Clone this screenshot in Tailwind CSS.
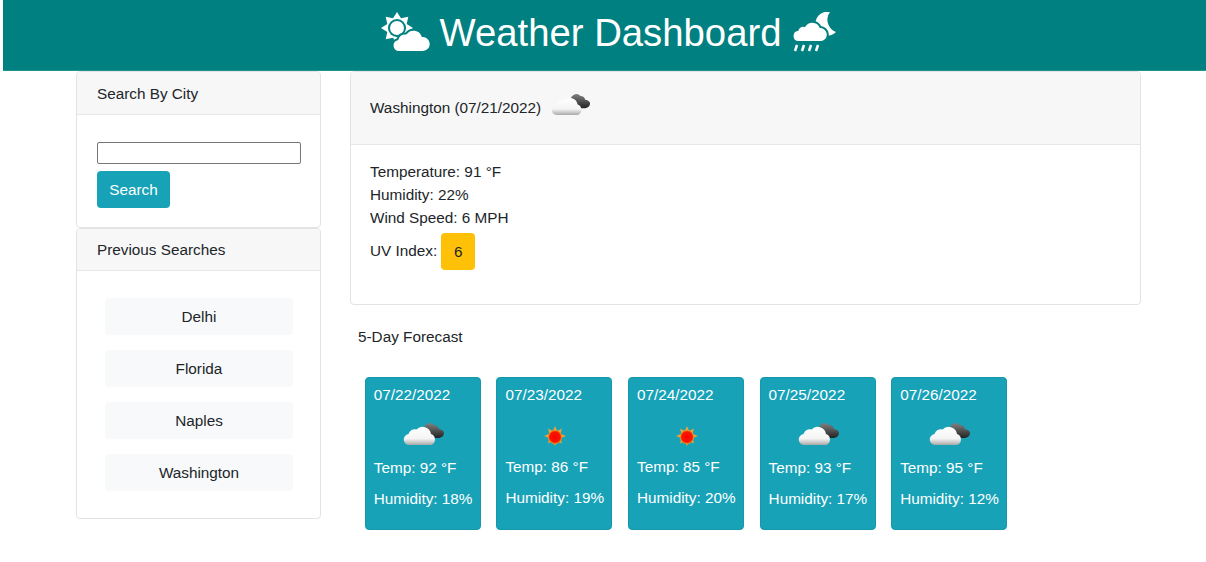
<!DOCTYPE html>
<html lang="en">
<head>
  <meta charset="UTF-8" />
  <title>Weather Dashboard</title>
  <script src="https://cdn.jsdelivr.net/npm/@tailwindcss/browser@4"></script>
</head>
<body class="bg-white text-[#212529] font-['Liberation_Sans',Arial,sans-serif] text-[15.3px] leading-[23px]">

  <!-- shared icons -->
  <svg class="absolute w-0 h-0">
    <defs>
      <linearGradient id="whiteCloud" x1="0" y1="0" x2="0" y2="1">
        <stop offset="0" stop-color="#ffffff" />
        <stop offset="0.65" stop-color="#f4f4f4" />
        <stop offset="1" stop-color="#a8a8a8" />
      </linearGradient>
      <linearGradient id="darkCloud" x1="0" y1="0" x2="0" y2="1">
        <stop offset="0" stop-color="#808080" />
        <stop offset="1" stop-color="#222222" />
      </linearGradient>
      <radialGradient id="sunCore">
        <stop offset="0" stop-color="#ff0000" />
        <stop offset="0.75" stop-color="#f51a00" />
        <stop offset="1" stop-color="#f7a11a" />
      </radialGradient>
      <symbol id="clouds" viewBox="0 0 42 26">
        <path d="M21 9 a6 6 0 0 1 10 -6 a5.500 5.500 0 0 1 5 4 q5 1 5 4 q0 4 -5 5 h-12 z" fill="url(#darkCloud)" />
        <path d="M7 23 a5.500 5.500 0 0 1 -1.500 -11 a6.500 6.500 0 0 1 8 -4.500 a8.500 8.500 0 0 1 14.500 4.500 a5.800 5.800 0 0 1 0 11 z" fill="url(#whiteCloud)" />
      </symbol>
      <symbol id="sun" viewBox="0 0 24 24">
        <path d="M12 1 l2.200 5 4.800-2.500-1.500 5.200 5.500 2.300-5.500 2.300 1.500 5.200-4.800-2.500-2.200 5-2.200-5-4.800 2.500 1.500-5.200-5.500-2.300 5.500-2.300-1.500-5.200 4.800 2.500z" fill="#e8a33a" />
        <circle cx="12" cy="12" r="7" fill="url(#sunCore)" />
      </symbol>
    </defs>
  </svg>

  <!-- Header -->
  <header class="ml-[3px] h-[71px] pl-[8px] bg-[#008080] border-b border-[#1f9490] flex items-center justify-center text-white">
    <svg class="w-[50px] h-[40px] mr-[9px] mb-[6px]" viewBox="0 0 50 40">
      <polygon points="33,16 26.700,12 28.300,4.700 21,6.300 17,0 13,6.300 5.700,4.700 7.300,12 1,16 7.300,20 5.700,27.300 13,25.700 17,32 21,25.700 28.300,27.300 26.700,20" fill="#fff" />
      <circle cx="17" cy="16" r="9" fill="#008080" />
      <circle cx="17" cy="16" r="7" fill="#fff" />
      <path d="M19 40 a6.500 6.500 0 0 1 -1.500 -12.800 a7.500 7.500 0 0 1 8.500 -5.700 a9.500 9.500 0 0 1 16.500 2.500 a8 8 0 0 1 .5 16 z" fill="#fff" stroke="#008080" stroke-width="2" />
    </svg>
    <h1 class="text-[38.300px] leading-none font-normal mb-[3px]">Weather Dashboard</h1>
    <svg class="w-[45px] h-[40px] ml-[10px] mb-[6px]" viewBox="0 0 45 40">
      <path d="M38 0 A12 12 0 1 0 44 20 A13 13 0 0 1 38 0z" fill="#fff" />
      <path d="M6.500 30 a6 6 0 0 1 -1 -11.900 a5.500 5.500 0 0 1 7 -4 a9 9 0 0 1 16 1 a7.500 7.500 0 0 1 1 14.900 z" fill="#fff" stroke="#008080" stroke-width="2" />
      <g stroke="#fff" stroke-width="2.500" fill="none">
        <path d="M3 39 l2 -6" />
        <path d="M10 39 l2 -6" />
        <path d="M17 39 l2 -6" />
        <path d="M24 39 l2 -6" />
      </g>
    </svg>
  </header>

  <main class="flex items-start pl-[76px] gap-[29px]">

    <!-- Sidebar -->
    <aside class="w-[245px] shrink-0">
      <section class="h-[157px] bg-white border border-[#e3e3e3] rounded-[4px] overflow-hidden">
        <h2 class="h-[43px] bg-[#f7f7f7] border-b border-[#e7e7e7] pl-5 flex items-center font-normal">Search By City</h2>
        <div class="pl-5 pt-[27px]">
          <input type="text" class="block w-[204px] h-[22px] border border-[#767676] rounded-[2px] bg-white" />
          <button class="mt-[7px] w-[73px] h-[37px] pb-px bg-[#17a2b8] text-white rounded-[4px]">Search</button>
        </div>
      </section>
      <section class="h-[291px] bg-white border border-[#e3e3e3] rounded-[4px] overflow-hidden">
        <h2 class="h-[42px] bg-[#f7f7f7] border-b border-[#e7e7e7] pl-5 pb-px flex items-center font-normal">Previous Searches</h2>
        <ul class="flex flex-col gap-[15px] pt-[27px] pl-7 w-[216px]">
          <li class="h-[37px] bg-[#f8f9fa] rounded-[4px] flex items-center justify-center">Delhi</li>
          <li class="h-[37px] bg-[#f8f9fa] rounded-[4px] flex items-center justify-center">Florida</li>
          <li class="h-[37px] bg-[#f8f9fa] rounded-[4px] flex items-center justify-center">Naples</li>
          <li class="h-[37px] bg-[#f8f9fa] rounded-[4px] flex items-center justify-center">Washington</li>
        </ul>
      </section>
    </aside>

    <!-- Main content -->
    <div class="w-[791px]">
      <section class="h-[234px] border border-[#e3e3e3] rounded-[4px] overflow-hidden">
        <div class="h-[73px] bg-[#f7f7f7] border-b border-[#e7e7e7] pl-[19px] pb-[2px] flex items-center">
          <span>Washington (07/21/2022)</span>
          <svg class="w-[40px] h-[25px] ml-[10px] mb-[3px]"><use href="#clouds" /></svg>
        </div>
        <div class="pl-[19px] pt-[15px]">
          <p>Temperature: 91 °F</p>
          <p>Humidity: 22%</p>
          <p>Wind Speed: 6 MPH</p>
          <p class="flex items-center mt-1">
            <span class="mb-[2px]">UV Index:</span>
            <span class="ml-[4px] w-[34px] h-[37px] bg-[#ffc107] rounded-[4px] flex items-center justify-center">6</span>
          </p>
        </div>
      </section>

      <h2 class="mt-[20px] ml-2 font-normal">5-Day Forecast</h2>

      <!-- Forecast cards -->
      <div class="mt-[29px] ml-[14.800px] flex gap-[15.600px] text-white">
        <article class="w-[116px] h-[153px] bg-[#17a2b8] border border-[#1697ab] rounded-[4px] pl-2 pt-[5px]">
          <p>07/22/2022</p>
          <svg class="block w-[42px] h-[26px] ml-[29px] mt-[16px]"><use href="#clouds" /></svg>
          <p class="mt-[8px]">Temp: 92 °F</p>
          <p class="mt-2 whitespace-nowrap">Humidity: 18%</p>
        </article>
        <article class="w-[116px] h-[153px] bg-[#17a2b8] border border-[#1697ab] rounded-[4px] pl-2 pt-[5px]">
          <p>07/23/2022</p>
          <svg class="block w-[24px] h-[24px] ml-[38px] mt-[19px] mb-[1px]"><use href="#sun" /></svg>
          <p class="mt-[6px]">Temp: 86 °F</p>
          <p class="mt-2 whitespace-nowrap">Humidity: 19%</p>
        </article>
        <article class="w-[116px] h-[153px] bg-[#17a2b8] border border-[#1697ab] rounded-[4px] pl-2 pt-[5px]">
          <p>07/24/2022</p>
          <svg class="block w-[24px] h-[24px] ml-[38px] mt-[19px] mb-[1px]"><use href="#sun" /></svg>
          <p class="mt-[6px]">Temp: 85 °F</p>
          <p class="mt-2 whitespace-nowrap">Humidity: 20%</p>
        </article>
        <article class="w-[116px] h-[153px] bg-[#17a2b8] border border-[#1697ab] rounded-[4px] pl-2 pt-[5px]">
          <p>07/25/2022</p>
          <svg class="block w-[42px] h-[26px] ml-[29px] mt-[16px]"><use href="#clouds" /></svg>
          <p class="mt-[8px]">Temp: 93 °F</p>
          <p class="mt-2 whitespace-nowrap">Humidity: 17%</p>
        </article>
        <article class="w-[116px] h-[153px] bg-[#17a2b8] border border-[#1697ab] rounded-[4px] pl-2 pt-[5px]">
          <p>07/26/2022</p>
          <svg class="block w-[42px] h-[26px] ml-[29px] mt-[16px]"><use href="#clouds" /></svg>
          <p class="mt-[8px]">Temp: 95 °F</p>
          <p class="mt-2 whitespace-nowrap">Humidity: 12%</p>
        </article>
      </div>
    </div>
  </main>
</body>
</html>
